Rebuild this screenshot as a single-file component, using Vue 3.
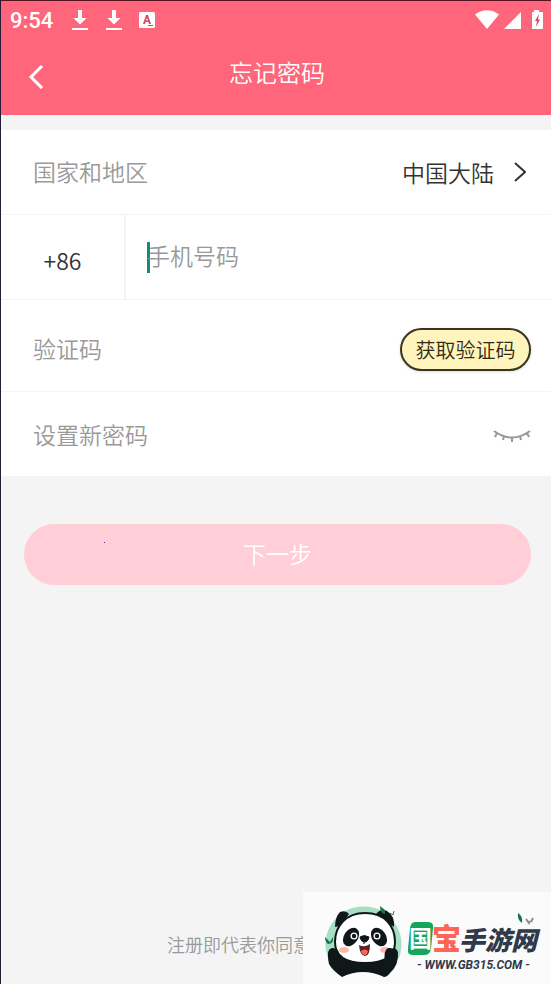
<script setup>
  import { ref } from 'vue'

  const phone = ref('');
  const code = ref('');
  const password = ref('');
  const hidden = ref(true);
</script>

<template>
  <div class="page">
    <header class="top">
      <div class="status">
        <span class="time">9:54</span>
        <svg v-for="n in 2" :key="n" class="download" viewBox="0 0 18 22">
          <path d="M7 1h4v8h4.500L9 15.500 2.500 9H7z" />
          <path d="M1 19h16v2H1z" />
        </svg>
        <svg class="letter" viewBox="0 0 16 16">
          <rect width="16" height="16" rx="1.500" />
          <path class="cut" d="M4 12 7 3h2l3 9h-2l-.6-2H6.600L6 12zm3.100-3.500h1.800L8 5.500zM9 13h5v1H9z" />
        </svg>
        <svg class="signals" viewBox="0 0 70 22">
          <path d="M1 5.500C8-.2 18-.2 25 5.500L13 20z" />
          <path d="M47 3v17H30z" />
          <path d="M60 1h5v2h3q1 0 1 1v15q0 1-1 1H59q-1 0-1-1V4q0-1 1-1h1z" />
          <path class="cut" d="M65 5 61 12h2l-1 6 4-7.500h-2z" />
        </svg>
      </div>
      <div class="bar">
        <button class="back" type="button" aria-label="返回">
          <svg viewBox="0 0 16 24"><path d="M14 1 3 12l11 11" /></svg>
        </button>
        <h1>忘记密码</h1>
      </div>
    </header>

    <form @submit.prevent>
      <div class="row">
        <span class="label">国家和地区</span>
        <button class="country" type="button">
          中国大陆
          <svg viewBox="0 0 12 20"><path d="m1 1 10 9-10 9" /></svg>
        </button>
      </div>
      <div class="row phone">
        <span class="prefix">+86</span>
        <span class="caret"></span>
        <input v-model="phone" type="tel" placeholder="手机号码" aria-label="手机号码" />
      </div>
      <div class="row code">
        <input v-model="code" type="text" placeholder="验证码" aria-label="验证码" />
        <button class="send" type="button">获取验证码</button>
      </div>
      <div class="row password">
        <input v-model="password" :type="hidden ? 'password' : 'text'" placeholder="设置新密码" aria-label="设置新密码" />
        <button class="eye" type="button" aria-label="显示密码" @click="hidden = !hidden">
          <svg viewBox="0 0 38 14"><path d="M1 2q18 13 36 0M4 4 2 8M11 7l-1 4M19 8v5M27 7l1 4M34 4l2 4" /></svg>
        </button>
      </div>
      <button class="next" type="submit">下一步</button>
    </form>

    <footer>注册即代表你同意</footer>

    <div class="brand">
      <svg viewBox="0 0 248 92">
        <!-- panda -->
        <path d="M25 66a38 38 0 1 1 71 0z" fill="#a6dfc4" />
        <path d="M25 64q0-9 6-8l6 6 44 4 2-9q8-5 12 3 1 13-8 21-3 4-6 4-21-10-42 0-10-7-13-13-1-4-1-8z" fill="#101719" />
        <path d="M32 35q0-10 5-15 6-2 9 2l-9 12zM73 22q5-6 11-3 8 5 7 16z" fill="#101719" />
        <path d="M62 21c20 0 30 13 30 29 0 15-11 21-30 21s-30-6-30-21c0-16 11-29 30-29z" fill="#fff" stroke="#101719" stroke-width="2" />
        <ellipse cx="48" cy="45" rx="7" ry="10" transform="rotate(35 48 45)" fill="#101719" />
        <ellipse cx="76" cy="45" rx="7" ry="10" transform="rotate(-35 76 45)" fill="#101719" />
        <circle cx="51" cy="44" r="3.500" fill="#fff" /><circle cx="74" cy="44" r="3.500" fill="#fff" />
        <circle cx="51" cy="44" r="2.200" fill="#101719" /><circle cx="74" cy="44" r="2.200" fill="#101719" />
        <ellipse cx="41" cy="58" rx="5" ry="3" fill="#ffb4a8" /><ellipse cx="82" cy="58" rx="5" ry="3" fill="#ffb4a8" />
        <path d="M56 53q5 3 11-1 0 12-5 12-5 0-6-11z" fill="#5b2325" />
        <path d="M58 59q4-3 7 0-1 4-3 4-3 0-4-4z" fill="#ff665b" />
        <path d="M57 45q4-3 9 0-1 5-4.500 5T57 45zM61 49v3" fill="#101719" stroke="#101719" />
        <path d="M25 66q-1-11 6-9 5 0 5 5l2 9zM82 70q-2-11 3-14 8-1 9 6z" fill="#101719" />
        <!-- leaves -->
        <path d="m77 14 5 4v4q-5-1-5-8zM22 45l5 5 3-5q1 7-5 7-3-2-3-7z" fill="#16734d" />
        <path d="m87 21 3 2 1-4" fill="none" stroke="#49635a" />
        <path d="M215 21q5 3 4 10-5-3-4-10z" fill="#16734d" />
        <path d="m223 27 3 4 1-2m1 1 2-4" fill="none" stroke="#81938b" stroke-width="2" />
        <!-- name -->
        <path d="M112 30h13q6 0 5 6l-2 21q-1 6-7 6h-11q-6 0-5-6l2-21q1-6 5-6z" fill="#14a75b" />
        <text class="name badge" x="106" y="55" font-size="23">国</text>
        <text class="name treasure" x="129" y="58" font-size="29">宝</text>
        <text class="name slanted" x="156" y="58" font-size="26">手游网</text>
        <text class="site" x="114" y="77">- WWW.GB315.COM -</text>
      </svg>
    </div>
  </div>
</template>

<style>
  body {
    margin: 0;
    background: #f4f4f4;
  }
</style>

<style scoped>
  * {
    box-sizing: border-box;
  }

  .page {
    position: relative;
    display: flex;
    flex-direction: column;
    min-height: 100vh;
    border-top: 1px solid #571222;
    border-left: 1px solid #251d38;
    background: #f4f4f4;
    color: #333;
    font-family: "Noto Sans CJK SC", sans-serif;
    font-weight: 350;
    font-size: 23px;
  }

  button, input {
    margin: 0;
    padding: 0;
    border: 0;
    background: none;
    color: inherit;
    font: inherit;
    outline: none;
  }

  svg {
    display: block;
    flex: none;
  }

  .top {
    background: #ff667b;
    color: #fff;
  }

  .status {
    display: flex;
    align-items: center;
    gap: 16px;
    height: 38px;
    padding: 0 7px 0 9px;
    fill: #fff;
  }

  .time {
    margin-right: 2px;
    font-family: Roboto, sans-serif;
    font-size: 22px;
    font-weight: 500;
  }

  .download {
    width: 18px;
    height: 22px;
  }

  .letter {
    width: 16px;
    height: 16px;
  }

  .signals {
    width: 70px;
    height: 22px;
    margin-left: auto;
  }

  .cut {
    fill: #d94867;
  }

  .bar {
    display: grid;
    grid-template-columns: 72px 1fr 70px;
    align-items: center;
    height: 76px;
    padding-bottom: 10px;
  }

  .back {
    padding: 10px 0 0 27px;
  }

  .back svg {
    width: 16px;
    height: 24px;
    fill: none;
    stroke: #fff;
    stroke-width: 3;
  }

  h1 {
    margin: 0;
    font-size: 24px;
    font-weight: 350;
    line-height: 36px;
    text-align: center;
  }

  form {
    display: flex;
    flex-direction: column;
    padding-top: 15px;
  }

  .row {
    display: flex;
    align-items: center;
    justify-content: space-between;
    height: 85px;
    padding: 0 20px 0 32px;
    border-bottom: 1px solid #f4f4f4;
    background: #fff;
  }

  .row.code {
    height: 92px;
    padding-top: 8px;
  }

  .row.password {
    padding-top: 4px;
  }

  .row input {
    flex: 1;
    min-width: 0;
    height: 38px;
    padding-bottom: 4px;
  }

  .label {
    padding-bottom: 2px;
    color: #999;
  }

  input::placeholder {
    color: #999;
    opacity: 1;
  }

  .country {
    display: flex;
    align-items: center;
    gap: 20px;
    padding-right: 5px;
  }

  .country svg {
    width: 12px;
    height: 20px;
    fill: none;
    stroke: #333;
    stroke-width: 2;
  }

  .row.phone {
    padding-left: 0;
  }

  .prefix {
    display: flex;
    align-items: center;
    justify-content: center;
    width: 125px;
    height: 100%;
    margin-right: 21px;
    padding-top: 6px;
    border-right: 2px solid #f4f4f4;
  }

  .caret {
    width: 3px;
    height: 31px;
    margin-right: -3px;
    background: #0c9079;
  }

  .send {
    width: 131px;
    height: 43px;
    border: 2px solid #393322;
    border-radius: 22px;
    background: #fff4bc;
    color: #302b19;
    font-size: 20px;
    box-shadow: 0 1px 3px #ddd;
  }

  .eye svg {
    width: 38px;
    height: 14px;
    fill: none;
    stroke: #999;
    stroke-width: 2;
  }

  .next {
    position: relative;
    height: 61px;
    margin: 47px 20px 0 23px;
    padding-bottom: 4px;
    border-radius: 31px;
    background: #ffced7;
    color: #fff;
  }

  .next::before {
    content: "";
    position: absolute;
    top: 18px;
    left: 80px;
    width: 1px;
    height: 1px;
    background: #5a2a8c;
  }

  footer {
    margin-top: auto;
    padding: 40px 0 26px 166px;
    color: #999;
    font-size: 18px;
    line-height: 28px;
  }

  .brand {
    position: absolute;
    right: 0;
    bottom: 0;
    width: 248px;
    background: #fbfbfb;
  }

  .name {
    font-family: "Noto Sans CJK SC", sans-serif;
    font-weight: 900;
    fill: #303949;
  }

  .badge {
    fill: #fff;
    font-weight: 700;
  }

  .treasure {
    fill: #ff6556;
  }

  .slanted {
    font-style: italic;
  }

  .site {
    fill: #303949;
    font-family: Roboto, sans-serif;
    font-size: 12px;
    font-style: italic;
    font-weight: 700;
  }
</style>
